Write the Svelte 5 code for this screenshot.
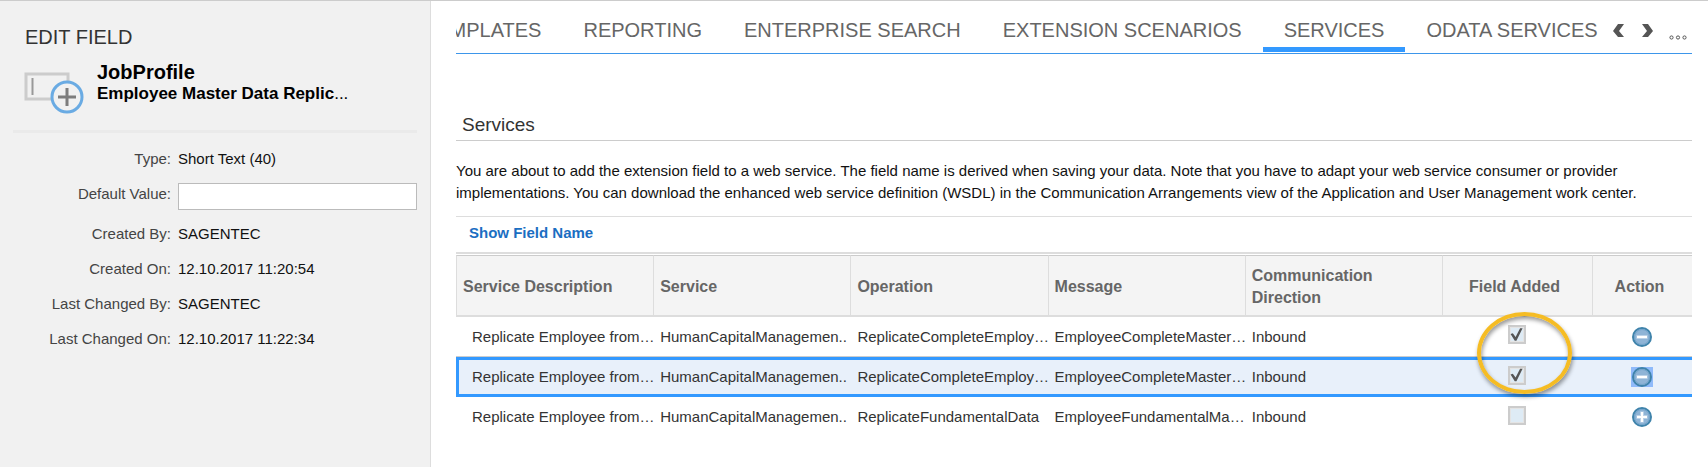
<script>
  const tabs = [
    'TEMPLATES',
    'REPORTING',
    'ENTERPRISE SEARCH',
    'EXTENSION SCENARIOS',
    'SERVICES',
    'ODATA SERVICES'
  ];
  let activeTab = $state('SERVICES');
  let defaultValue = $state('');
  let selected = $state(1);

  const details = [
    { label: 'Created By:', value: 'SAGENTEC' },
    { label: 'Created On:', value: '12.10.2017 11:20:54' },
    { label: 'Last Changed By:', value: 'SAGENTEC' },
    { label: 'Last Changed On:', value: '12.10.2017 11:22:34' }
  ];

  let services = $state([
    {
      description: 'Replicate Employee from…',
      service: 'HumanCapitalManagemen..',
      operation: 'ReplicateCompleteEmploy…',
      message: 'EmployeeCompleteMaster…',
      direction: 'Inbound',
      added: true
    },
    {
      description: 'Replicate Employee from…',
      service: 'HumanCapitalManagemen..',
      operation: 'ReplicateCompleteEmploy…',
      message: 'EmployeeCompleteMaster…',
      direction: 'Inbound',
      added: true
    },
    {
      description: 'Replicate Employee from…',
      service: 'HumanCapitalManagemen..',
      operation: 'ReplicateFundamentalData',
      message: 'EmployeeFundamentalMa…',
      direction: 'Inbound',
      added: false
    }
  ]);

  function toggle(index) {
    services[index].added = !services[index].added;
    selected = index;
  }
</script>

<div class="page">
  <aside class="sidebar">
    <h1>EDIT FIELD</h1>
    <div class="field-head">
      <svg class="field-icon" width="62" height="44" viewBox="0 0 62 44" aria-hidden="true">
        <rect x="2" y="2" width="42" height="25" fill="#f1f1f1" stroke="#ccc" stroke-width="3" />
        <path d="M8.5 6v17" stroke="#999" stroke-width="2" />
        <circle cx="43" cy="25" r="15" fill="#f1f1f1" stroke="#6aabe3" stroke-width="3" />
        <path d="M34 25h18M43 16v18" stroke="#7d7d7d" stroke-width="3" />
      </svg>
      <div>
        <h2>JobProfile</h2>
        <p class="object">Employee Master Data Replic<span>...</span></p>
      </div>
    </div>

    <div class="details">
      <span class="label">Type:</span>
      <span>Short Text (40)</span>
      <label class="label" for="default-value">Default Value:</label>
      <input id="default-value" type="text" bind:value={defaultValue} />
      {#each details as item}
        <span class="label">{item.label}</span>
        <span>{item.value}</span>
      {/each}
    </div>
  </aside>

  <main>
    <nav class="tab-bar">
      <div class="tab-view">
        <div class="tabs" role="tablist">
          {#each tabs as tab}
            <button
              role="tab"
              class="tab"
              class:active={tab === activeTab}
              aria-selected={tab === activeTab}
              onclick={() => (activeTab = tab)}>{tab}</button>
          {/each}
        </div>
      </div>
      <div class="tab-tools">
        <button aria-label="Previous tabs">
          <svg width="12" height="14" viewBox="0 0 12 14"><path d="M5 0h6L6 7l5 6H5L0 7z" fill="#555" /></svg>
        </button>
        <button aria-label="Next tabs">
          <svg width="12" height="14" viewBox="0 0 12 14"><path d="M7 0H1l5 7-5 6h6l5-6z" fill="#555" /></svg>
        </button>
        <button class="more" aria-label="More tabs">
          <svg width="19" height="5" viewBox="0 0 19 5" fill="none" stroke="#555">
            <circle cx="2.5" cy="2.5" r="1.6" />
            <circle cx="9" cy="2.5" r="1.6" />
            <circle cx="15.5" cy="2.5" r="1.6" />
          </svg>
        </button>
      </div>
    </nav>

    <h3>Services</h3>
    <p class="hint">
      You are about to add the extension field to a web service. The field name is derived when saving your data.
      Note that you have to adapt your web service consumer or provider implementations. You can download the
      enhanced web service definition (WSDL) in the Communication Arrangements view of the Application and User
      Management work center.
    </p>

    <div class="toolbar">
      <button>Show Field Name</button>
    </div>

    <table>
      <thead>
        <tr>
          <th>Service Description</th>
          <th>Service</th>
          <th>Operation</th>
          <th>Message</th>
          <th>Communication Direction</th>
          <th class="added">Field Added</th>
          <th class="action">Action</th>
        </tr>
      </thead>
      <tbody>
        {#each services as row, i}
          <tr class:selected={i === selected} class:above={i === selected - 1}>
            <td>{row.description}</td>
            <td>{row.service}</td>
            <td>{row.operation}</td>
            <td>{row.message}</td>
            <td>{row.direction}</td>
            <td class="added">
              <input type="checkbox" aria-label="Field added" checked={row.added} disabled />
              {#if i === 0}
                <div class="marker"></div>
              {/if}
            </td>
            <td class="action">
              <button aria-label={row.added ? 'Remove field' : 'Add field'} onclick={() => toggle(i)}>
                <svg width="20" height="20" viewBox="0 0 20 20">
                  <circle cx="10" cy="10" r="9" fill="#8fb4d6" stroke="#3f83ab" stroke-width="2" />
                  <circle cx="10" cy="10" r="7.5" fill="none" stroke="#74a5cc" />
                  <path d={row.added ? 'M4.5 10h11' : 'M4.5 10h11M10 4.5v11'} stroke="#bcd2e7" stroke-width="4" />
                  <path d={row.added ? 'M5 10h10' : 'M5 10h10M10 5v10'} stroke="#fff" stroke-width="2" />
                </svg>
              </button>
            </td>
          </tr>
        {/each}
      </tbody>
    </table>
  </main>
</div>

<style>
  :global(body) {
    margin: 0;
    background: #fff;
  }

  .page {
    display: flex;
    min-height: 100vh;
    box-sizing: border-box;
    border-top: 1px solid #ccc;
    font-family: 'Liberation Sans', Arial, sans-serif;
    font-size: 15px;
    line-height: 22px;
    color: #111;
  }

  h1, h2, h3, p {
    margin: 0;
    font-weight: normal;
  }

  button {
    padding: 0;
    border: 0;
    background: none;
    font: inherit;
    color: inherit;
    cursor: pointer;
  }

  svg {
    display: block;
  }

  .sidebar {
    flex: 0 0 404px;
    padding: 24px 13px 0;
    background: #f1f1f1;
    border-right: 1px solid #ddd;
  }

  h1 {
    padding-left: 12px;
    font-size: 20px;
    line-height: 24px;
    color: #333;
  }

  .field-head {
    display: flex;
    gap: 11px;
    padding: 11px 0 14px 11px;
    border-bottom: 3px solid #eaeaea;
    color: #000;
  }

  .field-icon {
    margin-top: 12px;
  }

  h2 {
    font-size: 20px;
    font-weight: bold;
    line-height: 24px;
  }

  .object {
    font-size: 17px;
    font-weight: bold;
    line-height: 20px;
  }

  .object span {
    font-weight: normal;
  }

  .details {
    display: grid;
    grid-template-columns: 158px 1fr;
    column-gap: 7px;
    row-gap: 13px;
    padding-top: 15px;
  }

  .label {
    text-align: right;
    color: #444;
  }

  .details input {
    box-sizing: border-box;
    width: 100%;
    height: 27px;
    padding: 0 6px;
    border: 1px solid #bbb;
    background: #fff;
    font: inherit;
  }

  main {
    flex: 1;
    min-width: 0;
    padding: 0 16px 0 25px;
  }

  .tab-bar {
    display: flex;
    border-bottom: 1px solid #3d96ea;
  }

  .tab-view {
    flex: 1;
    min-width: 0;
    overflow: hidden;
  }

  /* scrolled so that the first tab is partly out of view */
  .tabs {
    display: flex;
    margin-left: -53px;
    padding-bottom: 1px;
  }

  .tab {
    flex: none;
    padding: 16px 21px 4px;
    border-bottom: 5px solid transparent;
    font-size: 20px;
    line-height: 26px;
    white-space: nowrap;
    color: #666;
  }

  .tab.active {
    border-bottom-color: #3399ff;
  }

  .tab-tools {
    flex: none;
    display: flex;
    align-items: flex-start;
    gap: 16px;
    padding: 23px 4px 0 15px;
  }

  .more {
    padding-top: 11px;
  }

  h3 {
    margin-top: 58px;
    padding: 0 6px 3px;
    border-bottom: 1px solid #ccc;
    font-size: 19px;
    line-height: 25px;
    color: #333;
  }

  .hint {
    padding: 19px 0 12px;
  }

  .toolbar {
    padding: 5px 13px 8px;
    border-top: 1px solid #ddd;
    border-bottom: 2px solid #ddd;
  }

  .toolbar button {
    display: block;
    font-weight: bold;
    color: #1b6ec2;
  }

  table {
    width: 100%;
    margin-top: 1px;
    border-spacing: 0;
    table-layout: fixed;
  }

  th {
    height: 57px;
    padding: 2px 6px 0;
    border-top: 1px solid #ccc;
    border-bottom: 2px solid #ddd;
    border-left: 1px solid #ddd;
    background: #f4f4f4;
    font-size: 16px;
    text-align: left;
    color: #666;
  }

  td {
    height: 40px;
    box-sizing: border-box;
    padding: 0 0 0 7px;
    white-space: nowrap;
    color: #333;
  }

  td:first-child {
    padding-left: 16px;
  }

  .above td {
    border-bottom: 1px solid #ccc;
  }

  .selected td {
    border-top: 3px solid #3399ff;
    border-bottom: 3px solid #3399ff;
    background: #e8f0fa;
  }

  .selected td:first-child {
    padding-left: 13px;
    border-left: 3px solid #3399ff;
  }

  .added {
    width: 150px;
    box-sizing: border-box;
    padding-right: 12px;
    text-align: center;
  }

  .action {
    width: 100px;
    box-sizing: border-box;
    padding-right: 12px;
    text-align: center;
  }

  th.added,
  th.action {
    height: 62px;
  }

  td.added {
    position: relative;
    padding: 0 0 4px;
  }

  td.action {
    padding: 0;
  }

  .added input {
    appearance: none;
    display: block;
    box-sizing: border-box;
    width: 18px;
    height: 19px;
    margin: 0 auto;
    border: 2px solid #ccc;
    outline: 1px solid #e4e4e4;
    outline-offset: -3px;
    background: #deebf5;
  }

  .added input:checked::before {
    content: '';
    display: block;
    height: 100%;
    background: #555;
    clip-path: polygon(4% 46%, 20% 42%, 40% 66%, 72% 8%, 90% 8%, 46% 92%, 34% 92%);
  }

  .action button {
    display: block;
    margin: 0 auto;
    padding: 0 1px;
  }

  .selected .action button {
    background: #8fbafa;
  }

  /* highlight around the two ticked boxes */
  .marker {
    position: absolute;
    z-index: 1;
    top: -5px;
    left: 35px;
    box-sizing: border-box;
    width: 95px;
    height: 82px;
    border: 4px solid #f5bc24;
    border-radius: 50%;
    box-shadow: 1px 3px 4px rgba(0, 0, 0, 0.4), inset 1px 3px 4px rgba(0, 0, 0, 0.4);
    pointer-events: none;
  }
</style>
